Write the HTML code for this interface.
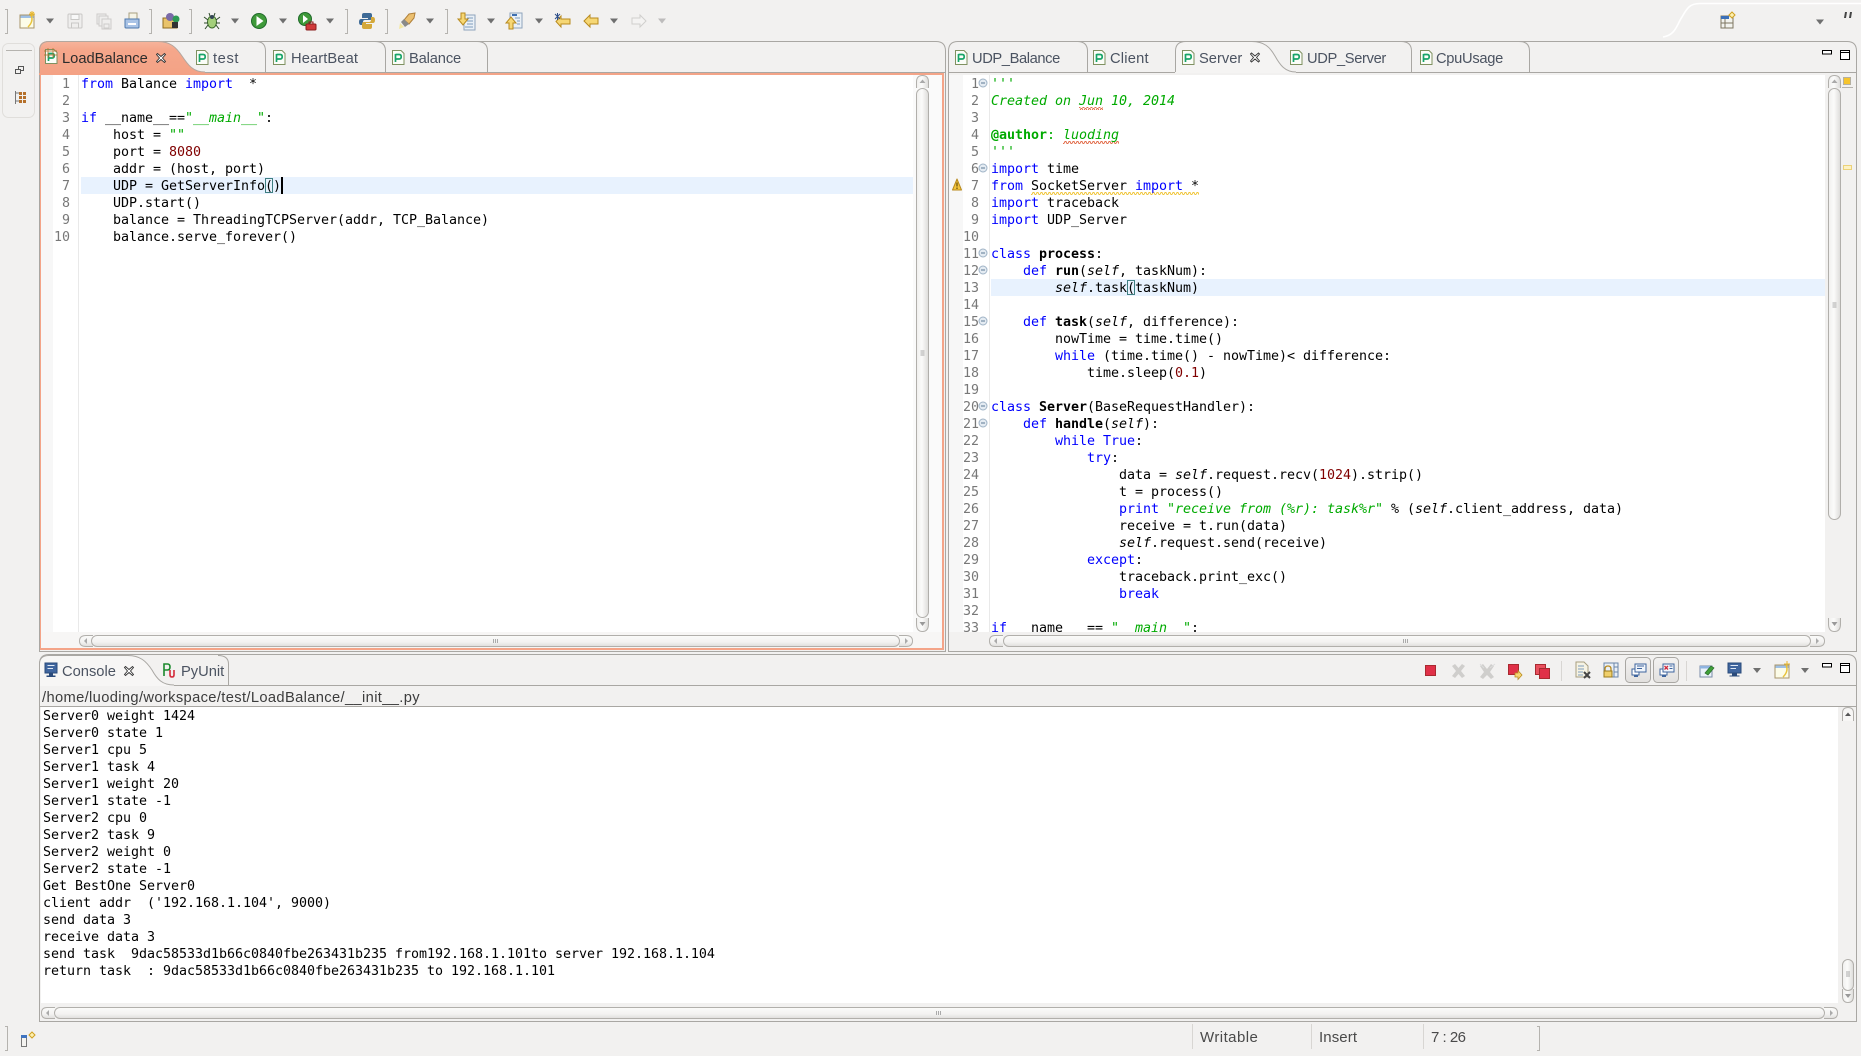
<!DOCTYPE html>
<html><head><meta charset="utf-8"><title>Eclipse</title>
<style>
html,body{margin:0;padding:0;width:1861px;height:1056px;overflow:hidden;background:#f2f1f0}
svg.bg{position:absolute;left:0;top:0}
.ui{position:absolute;font:14.7px/18px "Liberation Sans",sans-serif;white-space:pre;color:#4b5361}
.ui.a{color:#2c2c2c}
.st{position:absolute;font:15px/18px "Liberation Sans",sans-serif;white-space:pre;color:#4a4a4a;letter-spacing:.45px}
.code,.nums{position:absolute;font:13.33px/17px "DejaVu Sans Mono",monospace;white-space:pre;color:#000;overflow:hidden;letter-spacing:-.025px}
.nums{color:#787878;text-align:right}
.code b{font-weight:bold}
.k{color:#0000ff}.s{color:#00aa00}.i{color:#00aa00;font-style:italic}.n{color:#800000}.f{font-style:italic}
</style></head><body>
<svg class="bg" width="1861" height="1056" viewBox="0 0 1861 1056">
<defs>
<linearGradient id="hg" x1="0" y1="0" x2="0" y2="1"><stop offset="0" stop-color="#fbfbfa"/><stop offset=".6" stop-color="#f3f2f1"/><stop offset="1" stop-color="#dfdedc"/></linearGradient>
<linearGradient id="vg" x1="0" y1="0" x2="1" y2="0"><stop offset="0" stop-color="#f0efee"/><stop offset=".45" stop-color="#fbfbfa"/><stop offset="1" stop-color="#dcdbd9"/></linearGradient>
<linearGradient id="og" x1="0" y1="0" x2="0" y2="1"><stop offset="0" stop-color="#f6b49c"/><stop offset=".25" stop-color="#f5a78b"/><stop offset="1" stop-color="#f4a285"/></linearGradient>
<linearGradient id="tb" x1="0" y1="0" x2="0" y2="1"><stop offset="0" stop-color="#f3f2f1"/><stop offset="1" stop-color="#e2e0de"/></linearGradient>
<pattern id="sqr" width="4" height="3" patternUnits="userSpaceOnUse"><path d="M0,2.5 L1,.5 L2,.5 L3,2.5 L4,2.5" fill="none" stroke="#e2704f" stroke-width="1"/></pattern>
<pattern id="sqy" width="4" height="3" patternUnits="userSpaceOnUse"><path d="M0,2.5 L1,.5 L2,.5 L3,2.5 L4,2.5" fill="none" stroke="#f0c63c" stroke-width="1"/></pattern>
<g id="doc"><path d="M.5,.5H9L12,3.5V14.5H.5Z" fill="#fbfdf8" stroke="#7f9160"/><path d="M3.5,4V12M3.5,4.5H7.2Q9.2,4.5 9.2,6.7T7.2,9H3.5" fill="none" stroke="#17a468" stroke-width="1.7"/></g>
<path id="dd" d="M-4,-2.5H4L0,2.5Z" fill="#6f6f6f"/>
<g id="fold"><circle r="4" fill="#e4ebf2" stroke="#9fb3c6"/><path d="M-2,0H2" stroke="#5d7a94"/></g>
<path id="cx" d="M-4.5,-3.5L-3.5,-4.5L0,-1.5L3.5,-4.5L4.5,-3.5L1.5,0L4.5,3.5L3.5,4.5L0,1.5L-3.5,4.5L-4.5,3.5L-1.5,0Z" fill="#fff" stroke="#333" stroke-width=".9"/>
</defs>

<!-- top-right switcher curve -->
<path d="M1663,37 C1676,35 1677,24 1682,17 C1687,8 1690,3.5 1700,3.5 H1861" fill="none" stroke="#fff" stroke-width="1.6"/>

<!-- toolbar separators -->
<g fill="none" stroke="#b5b3af">
<path d="M5,9.5H7.5V33.5H5"/><path d="M149,9.5H151.5V33.5H149"/><path d="M189,9.5H191.5V33.5H189"/><path d="M345,9.5H347.5V33.5H345"/><path d="M385,9.5H387.5V33.5H385"/><path d="M445,9.5H447.5V33.5H445"/>
</g>

<!-- toolbar icons -->
<g transform="translate(27,21)"><rect x="-7" y="-6" width="14" height="13" fill="#fcfce8" stroke="#a8956a"/><rect x="-6.5" y="-5.5" width="13" height="2.5" fill="#9ec0e6"/><path d="M4,-6 Q7,0 1,6" fill="none" stroke="#e8c33c" stroke-width="1.5"/><path d="M5,-10V-4M2,-7H8M3,-9L7,-5M7,-9L3,-5" stroke="#e8b830"/></g>
<use href="#dd" x="50" y="21"/>
<g transform="translate(75,21)" fill="none" stroke="#c9c8c6"><rect x="-7" y="-7" width="14" height="14" rx="1" fill="#efeeed"/><rect x="-4" y="-6.5" width="8" height="5" fill="#f8f8f8"/><rect x="-3.5" y="2" width="7" height="5"/></g>
<g transform="translate(104,21)" fill="#efeeed" stroke="#cdccca"><rect x="-7" y="-7" width="9" height="10"/><rect x="-5" y="-5" width="9" height="10"/><rect x="-2" y="-2" width="9" height="10"/><rect x="0" y="3" width="5" height="4"/></g>
<g transform="translate(132,21)"><rect x="-3" y="-8" width="8" height="8" fill="#f6f4e6" stroke="#a8a080"/><path d="M-7,-2H7V6Q7,7 6,7H-6Q-7,7 -7,6Z" fill="#a9c3e6" stroke="#4f78ac"/><rect x="-4" y="2" width="8" height="2" fill="#fff"/></g>
<g transform="translate(171,21)"><path d="M-8,-3H-2L0,-1H6V7H-8Z" fill="#e9c36a" stroke="#8e6b1f"/><circle cx="-1" cy="-4" r="4" fill="#7a6aa8"/><circle cx="5" cy="-2" r="3.5" fill="#2e9a55"/><rect x="1" y="1" width="6" height="6" fill="#333"/></g>
<g transform="translate(212,21)"><ellipse cx="0" cy="1" rx="4.5" ry="6" fill="#a3cf7a" stroke="#3b6b2a"/><path d="M-8,-4L-4,-1M8,-4L4,-1M-8,2H-4M8,2H4M-7,8L-4,4M7,8L4,4M-3,-8L-2,-5M3,-8L2,-5" stroke="#2e4a2a"/><circle cx="0" cy="-4" r="2" fill="#345"/></g>
<use href="#dd" x="235" y="21"/>
<g transform="translate(259,21)"><circle r="7.5" fill="#3f9a3a" stroke="#1f6a2a"/><path d="M-2.5,-5L4.5,0L-2.5,5Z" fill="#fff"/></g>
<use href="#dd" x="283" y="21"/>
<g transform="translate(305,19)"><circle r="6.5" fill="#3f9a3a" stroke="#1f6a2a"/><path d="M-2,-4L3,0L-2,4Z" fill="#fff"/></g>
<g transform="translate(311,26)"><rect x="-5" y="-2" width="10" height="6" rx="1" fill="#d03a3a" stroke="#8a1e1e"/><path d="M-2,-2V-4H2V-2" fill="none" stroke="#8a1e1e"/></g>
<use href="#dd" x="330" y="21"/>
<g transform="translate(367,21)"><path d="M0,-8H-3Q-5,-8 -5,-6V-3H1V-2H-6Q-8,-2 -8,1Q-8,4 -6,4H-4V1Q-4,-1 -2,-1H3Q5,-1 5,-3V-6Q5,-8 3,-8Z" fill="#3e6a96"/><path d="M0,8H3Q5,8 5,6V3H-1V2H6Q8,2 8,-1Q8,-4 6,-4H4V-1Q4,1 2,1H-3Q-5,1 -5,3V6Q-5,8 -3,8Z" fill="#d4a83a"/></g>
<g transform="translate(407,21)"><path d="M8,-8L2,-7L-3,-1L2,3L7,-3Z" fill="#ecc070" stroke="#b0803a"/><path d="M-3,-2L2,3L-2,6L-6,1Z" fill="#8a8a88"/><path d="M-7,2L-3,6L-8,8Z" fill="#f4e8a0"/></g>
<use href="#dd" x="430" y="21"/>
<g transform="translate(466,21)"><rect x="-2" y="-6" width="11" height="15" fill="#eaf0f6" stroke="#8fa4bc"/><path d="M1,-3H7M1,0H7M1,3H7M-1,6H7" stroke="#7f9cbc"/><path d="M-5,-8H-1V-2H2L-3,4L-8,-2H-5Z" fill="#f6d774" stroke="#b88a1e"/></g>
<use href="#dd" x="491" y="21"/>
<g transform="translate(514,21)"><rect x="-4" y="-8" width="12" height="15" fill="#eaf0f6" stroke="#8fa4bc"/><path d="M-2,-6H3" stroke="#3f6fb0" stroke-width="2"/><path d="M1,-3H6M3,0H6M3,3H6" stroke="#7f9cbc"/><path d="M-5,8H-1V2H2L-3,-4L-8,2H-5Z" fill="#f6d774" stroke="#b88a1e"/></g>
<use href="#dd" x="539" y="21"/>
<g transform="translate(563,21)"><path d="M-2,-5V-2H7V3H-2V6L-7,.5Z" fill="#f6d774" stroke="#b88a1e"/><path d="M-8,-7L-3,-2M-3,-7L-8,-2M-5.5,-8V-1" stroke="#2e4f8a"/></g>
<g transform="translate(591,21)"><path d="M-1,-6V-3H7V3H-1V6L-7,0Z" fill="#f6d774" stroke="#b88a1e"/></g>
<use href="#dd" x="614" y="21"/>
<g transform="translate(639,21)"><path d="M1,-6V-3H-7V3H1V6L7,0Z" fill="#f4f3f2" stroke="#d0cfcd"/></g>
<use href="#dd" x="662" y="21" opacity=".4"/>

<!-- right top icons -->
<g transform="translate(1727,22)"><rect x="-6" y="-6" width="12" height="12" fill="#f2f3ee" stroke="#7d7660"/><rect x="-6" y="-6" width="8" height="3" fill="#3a6fb8"/><path d="M-2,-3V6M-6,1H6" stroke="#7d7660"/><path d="M5,-10L8,-7L5,-4L2,-7Z" fill="#fdf0b0" stroke="#d0a020"/></g>
<use href="#dd" x="1820" y="22"/>
<path d="M1845,12H1847L1846,18H1844ZM1850,12H1852L1851,18H1849Z" fill="#444"/>

<!-- left trim -->
<rect x="2.5" y="43.5" width="32" height="74" rx="6" fill="#f2f1f0" stroke="#e0dedb"/>
<path d="M6,50.5H32" stroke="#b5b3af"/>
<g fill="none" stroke="#555"><rect x="18.5" y="66.5" width="5" height="4"/><rect x="15.5" y="69.5" width="5" height="4" fill="#f2f1f0"/></g>
<path d="M15.5,91V104M15.5,93H19M15.5,101H19" stroke="#777" fill="none"/><g fill="#b5702a"><rect x="19" y="92" width="3" height="3"/><rect x="23" y="92" width="3" height="3"/><rect x="19" y="96" width="3" height="3"/><rect x="23" y="96" width="3" height="3"/><rect x="19" y="100" width="3" height="3"/><rect x="23" y="100" width="3" height="3"/></g>

<!-- left editor panel -->
<rect x="39" y="73" width="905" height="577" fill="#f4a488"/>
<rect x="41" y="75" width="901" height="573" fill="#f7f6f5"/>
<rect x="41" y="75" width="872" height="557" fill="#fff"/>
<rect x="41" y="75" width="12" height="557" fill="#f7f7f7"/>
<rect x="913" y="75" width="29" height="557" fill="#fafafa"/>
<path d="M78.5,75V632" stroke="#e9e9e9"/>
<rect x="81" y="177" width="832" height="17" fill="#e8f2fe"/>
<rect x="265.5" y="178.5" width="7" height="14" fill="none" stroke="#3f7f82"/>
<rect x="281" y="177" width="2" height="17" fill="#000"/>
<path d="M39.5,73V51Q39.5,41.5 49,41.5H936Q945.5,41.5 945.5,51V651.5H39.5V73" fill="none" stroke="#a9a7a3"/>
<path d="M39,72.5H945" stroke="#a9a7a3"/>
<path d="M39,74V50Q39,41 49,41H158C170,41 176,47 182,56C188,65 193,72 205,72V75H39Z" fill="url(#og)"/>
<path d="M39.5,73V51Q39.5,41.5 49,41.5H158C170,41.5 176,47 182,56C188,65 193,72 205,72" fill="none" stroke="#b3a79f"/>
<path d="M256,41.5Q265.5,41.5 265.5,51V72M375,41.5Q385.5,41.5 385.5,51V72M477,41.5Q487.5,41.5 487.5,51V72" fill="none" stroke="#a9a7a3"/>
<use href="#doc" x="45" y="49"/><path d="M48,48V58M53,48V58M44,51H57M44,55H57" stroke="#b5702a" opacity=".8"/>
<use href="#cx" x="161" y="58"/>
<use href="#doc" x="196" y="50"/><use href="#doc" x="273" y="50"/><use href="#doc" x="392" y="50"/>

<!-- left vscroll -->
<g fill="url(#vg)" stroke="#b1afab">
<path d="M916.5,88V82Q916.5,75.5 922.5,75.5Q928.5,75.5 928.5,82V88"/>
<path d="M916.5,618V624Q916.5,631.5 922.5,631.5Q928.5,631.5 928.5,624V618"/>
<rect x="916.5" y="88.5" width="12" height="529" rx="6"/>
</g>
<path d="M919.5,83L922.5,79.5L925.5,83Z" fill="#aaa"/><path d="M919.5,622H925.5L922.5,626Z" fill="#999"/>
<path d="M920.5,351H924.5M920.5,353H924.5M920.5,355H924.5" stroke="#aaa"/>
<!-- left hscroll -->
<g fill="url(#hg)" stroke="#b1afab">
<path d="M93,635.5H86Q79.5,635.5 79.5,641Q79.5,646.5 86,646.5H93"/>
<path d="M899,635.5H906Q912.5,635.5 912.5,641Q912.5,646.5 906,646.5H899"/>
<rect x="91.5" y="635.5" width="808" height="11" rx="5.5"/>
</g>
<path d="M87,638V644L84,641Z" fill="#aaa"/><path d="M905,638V644L908,641Z" fill="#aaa"/>
<path d="M493.5,639V643M495.5,639V643M497.5,639V643" stroke="#aaa"/>

<!-- right editor panel -->
<rect x="949" y="75" width="876" height="557" fill="#fff"/>
<rect x="949" y="75" width="14" height="557" fill="#f7f7f7"/>
<path d="M989.5,75V632" stroke="#e9e9e9"/>
<rect x="991" y="279" width="834" height="17" fill="#e8f2fe"/>
<rect x="1127.5" y="280.5" width="7" height="14" fill="none" stroke="#3f7f82"/>
<path d="M948.5,73V51Q948.5,41.5 958,41.5H1847Q1856.5,41.5 1856.5,51V651.5H948.5V73" fill="none" stroke="#a9a7a3"/>
<path d="M948,72.5H1175M1296,72.5H1856" stroke="#a9a7a3"/>
<path d="M1087.5,72V51Q1087.5,42 1078,41.5M1176,72V50" fill="none" stroke="#a9a7a3"/>
<path d="M1175.5,73V51Q1175.5,41.5 1186,41.5H1252C1264,41.5 1270,47 1275,56C1280,65 1285,72 1296,72V73Z" fill="#f5f4f3" stroke="none"/>
<path d="M1175.5,72V51Q1175.5,41.5 1186,41.5H1252C1264,41.5 1270,47 1275,56C1280,65 1285,72 1296,72" fill="none" stroke="#a9a7a3"/>
<path d="M1401,41.5Q1411.5,41.5 1411.5,51V72M1519,41.5Q1529.5,41.5 1529.5,51V72" fill="none" stroke="#a9a7a3"/>
<use href="#doc" x="955" y="50"/><use href="#doc" x="1093" y="50"/><use href="#doc" x="1182" y="50"/><use href="#doc" x="1290" y="50"/><use href="#doc" x="1420" y="50"/>
<use href="#cx" x="1255" y="57.5"/>
<rect x="1822.5" y="50.5" width="9" height="3.5" fill="#fff" stroke="#000"/>
<path d="M1840.5,50.5H1849.5V59.5H1840.5ZM1840.5,52.5H1849.5" fill="#fff" stroke="#000"/>
<!-- folds -->
<use href="#fold" x="983" y="83"/><use href="#fold" x="983" y="168"/><use href="#fold" x="983" y="253"/><use href="#fold" x="983" y="270"/><use href="#fold" x="983" y="321"/><use href="#fold" x="983" y="406"/><use href="#fold" x="983" y="423"/>
<!-- warning -->
<path d="M957,179L961.5,190H952.5Z" fill="#f3c53c" stroke="#b88a1e" stroke-linejoin="round"/><path d="M957,182.5V186.5M957,187.5V189" stroke="#4a3500"/>
<!-- squiggles -->
<rect x="1079" y="107" width="24" height="3" fill="url(#sqr)"/>
<rect x="1063" y="141" width="56" height="3" fill="url(#sqr)"/>
<rect x="1031" y="192" width="168" height="3" fill="url(#sqy)"/>
<!-- right vscroll -->
<g fill="url(#vg)" stroke="#b1afab">
<path d="M1828.5,88V82Q1828.5,75.5 1834.5,75.5Q1840.5,75.5 1840.5,82V88"/>
<path d="M1828.5,618V624Q1828.5,631.5 1834.5,631.5Q1840.5,631.5 1840.5,624V618"/>
<rect x="1828.5" y="88.5" width="12" height="431" rx="6"/>
</g>
<path d="M1831.5,83L1834.5,79.5L1837.5,83Z" fill="#aaa"/><path d="M1831.5,622H1837.5L1834.5,626Z" fill="#999"/>
<path d="M1832.5,303H1836.5M1832.5,305H1836.5M1832.5,307H1836.5" stroke="#aaa"/>
<!-- overview -->
<rect x="1843.5" y="77.5" width="7" height="7" fill="#f6c42c" stroke="#b5b0a0"/>
<path d="M1842,87.5H1853" stroke="#b5b3af"/>
<rect x="1843.5" y="165.5" width="8" height="4" fill="#fdf2c4" stroke="#ecd27a"/>
<!-- right hscroll -->
<g fill="url(#hg)" stroke="#b1afab">
<path d="M1003,635.5H995Q989.5,635.5 989.5,641Q989.5,646.5 995,646.5H1003"/>
<path d="M1810,635.5H1818Q1824.5,635.5 1824.5,641Q1824.5,646.5 1818,646.5H1810"/>
<rect x="1003.5" y="635.5" width="807" height="11" rx="5.5"/>
</g>
<path d="M997,638V644L994,641Z" fill="#aaa"/><path d="M1816,638V644L1819,641Z" fill="#aaa"/>
<path d="M1403.5,639V643M1405.5,639V643M1407.5,639V643" stroke="#aaa"/>

<!-- console panel -->
<rect x="41" y="707" width="1797" height="296" fill="#fff"/>
<path d="M39.5,685V664Q39.5,654.5 49,654.5H1847Q1856.5,654.5 1856.5,664V1021.5H39.5V685" fill="none" stroke="#a9a7a3"/>
<path d="M174,685.5H1856M39,706.5H1856" stroke="#a9a7a3"/>
<path d="M39.5,686V664Q39.5,655.5 49,655.5H128C140,655.5 146,661 152,670C157,679 162,685 174,685V686Z" fill="#f7f6f5"/>
<path d="M39.5,686V664Q39.5,655.5 49,655.5H128C140,655.5 146,661 152,670C157,679 162,685 174,685" fill="none" stroke="#a9a7a3"/>
<path d="M218,655.5Q228.5,655.5 228.5,664V685" fill="none" stroke="#a9a7a3"/>
<!-- console tab icons -->
<g transform="translate(51,670)"><rect x="-6" y="-7" width="12" height="10" fill="#3f659e" stroke="#2a4a7a"/><path d="M-3.5,-4.5H3.5M-3.5,-1.5H2" stroke="#dfe8f4"/><path d="M-2,3.5H2V5.5H4.5V7H-4.5V5.5H-2Z" fill="#2a4a7a"/></g>
<use href="#cx" x="129" y="671"/>
<path d="M164,676V664H167.5Q170,664 170,667T167.5,670H164" fill="none" stroke="#1c8a2e" stroke-width="1.6"/>
<path d="M170,670V675Q170,677 172,677T174,675V670" fill="none" stroke="#d42a3a" stroke-width="1.6"/>
<!-- console toolbar -->
<rect x="1425.5" y="665.5" width="10" height="10" fill="#e03048" stroke="#a82a30"/>
<g fill="#cfcecc"><path d="M1452,666L1455,664L1458.5,668L1462,664L1465,666L1461,671L1465,676L1462,678L1458.5,674L1455,678L1452,676L1456,671Z"/><path d="M1480,666L1483,664L1487,669L1491,664L1494,666L1490,672L1494,677L1491,679L1487,675L1483,679L1480,677L1484,672Z"/></g>
<path d="M1480,664L1484,668M1490,668L1495,664" stroke="#ddd"/>
<rect x="1508.5" y="664.5" width="10" height="10" fill="#e03048" stroke="#a82a30"/>
<path d="M1515,673H1518V670.5L1522,675L1518,679.5V677H1515Z" fill="#f6d774" stroke="#b88a1e" stroke-width=".8"/>
<rect x="1535.5" y="664.5" width="10" height="10" fill="#e8505e" stroke="#a82a30"/><rect x="1539.5" y="668.5" width="10" height="10" fill="#e03048" stroke="#a82a30"/>
<path d="M1561.5,661V681" stroke="#d8d6d3"/>
<g transform="translate(1582,670)"><path d="M-6,-8H2L6,-4V7H-6Z" fill="#f6f3e4" stroke="#a89f80"/><path d="M-4,-4H2M-4,-1H2M-4,2H1M-4,5H1" stroke="#7f9cbc"/><path d="M2,2L8,8M8,2L2,8" stroke="#444" stroke-width="2"/></g>
<g transform="translate(1611,670)"><rect x="-7" y="-7" width="14" height="14" fill="#eaf0f6" stroke="#6a85a8"/><path d="M3,-7V7M3,-3H7M3,2H7" stroke="#6a85a8"/><path d="M-6,1V-1Q-6,-4 -3,-4T0,-1V1" fill="none" stroke="#b88a1e" stroke-width="1.3"/><rect x="-7" y="1" width="8" height="6" fill="#f0cf6a" stroke="#9a7a1c"/></g>
<rect x="1625.5" y="657.5" width="25" height="25" rx="4" fill="url(#tb)" stroke="#a9a7a3"/>
<rect x="1653.5" y="657.5" width="25" height="25" rx="4" fill="url(#tb)" stroke="#a9a7a3"/>
<g transform="translate(1638,670)"><rect x="-6" y="-1" width="7" height="6" fill="#fff" stroke="#3f659e"/><path d="M-4,6H0" stroke="#3f659e" stroke-width="2"/><rect x="-3" y="-6" width="11" height="8" fill="#f0f5fb" stroke="#3f659e"/><path d="M-1,-4H6M-1,-1.5H4" stroke="#3f659e"/></g>
<g transform="translate(1666,670)"><rect x="-6" y="-1" width="7" height="6" fill="#fff" stroke="#3f659e"/><path d="M-4,6H0" stroke="#3f659e" stroke-width="2"/><rect x="-3" y="-6" width="11" height="8" fill="#f0f5fb" stroke="#3f659e"/><path d="M-1.5,-4L2,-.5M2,-4L-1.5,-.5" stroke="#d02a3a" stroke-width="1.3"/><path d="M3.5,-4H6.5M3.5,-1.5H6.5" stroke="#3f659e"/></g>
<path d="M1686.5,661V681" stroke="#d8d6d3"/>
<g transform="translate(1706,671)"><rect x="-6" y="-5" width="12" height="11" fill="#eaf2fa" stroke="#7a8ca8"/><rect x="-6" y="-5" width="12" height="2.5" fill="#8fb4e0"/><path d="M-1,2L5,-5L8,-3L2,4Z" fill="#3fa03a" stroke="#2a6a2a" stroke-width=".7"/></g>
<g transform="translate(1734,670)"><rect x="-6" y="-7" width="13" height="10" fill="#3f659e" stroke="#2a4a7a"/><path d="M-3.5,-4.5H4M-3.5,-1.5H2" stroke="#dfe8f4"/><path d="M-2,3.5H3V5.5H5.5V6.5H-4.5V5.5H-2Z" fill="#2a4a7a"/></g>
<use href="#dd" x="1757" y="670.5"/>
<g transform="translate(1782,671)"><rect x="-7" y="-6" width="14" height="13" fill="#fcfce8" stroke="#a8956a"/><rect x="-6.5" y="-5.5" width="13" height="2.5" fill="#9ec0e6"/><path d="M4,-6Q7,0 1,6" fill="none" stroke="#e8c33c" stroke-width="1.5"/><path d="M5,-10V-4M2,-7H8" stroke="#e8b830"/></g>
<use href="#dd" x="1805" y="670.5"/>
<rect x="1822.5" y="663.5" width="9" height="3.5" fill="#fff" stroke="#000"/>
<path d="M1840.5,663.5H1849.5V672.5H1840.5ZM1840.5,665.5H1849.5" fill="#fff" stroke="#000"/>
<!-- console vscroll -->
<g fill="url(#vg)" stroke="#b1afab">
<path d="M1842.5,721V713Q1842.5,707.5 1848,707.5Q1853.5,707.5 1853.5,713V721" fill="#f7f6f5"/>
<path d="M1842.5,989V996Q1842.5,1002.5 1848,1002.5Q1853.5,1002.5 1853.5,996V989"/>
<rect x="1842.5" y="959.5" width="11" height="31" rx="5.5"/>
</g>
<path d="M1845,716L1848,712.5L1851,716Z" fill="#555"/><path d="M1845,994H1851L1848,998Z" fill="#999"/>
<path d="M1846,972H1850M1846,974H1850M1846,976H1850" stroke="#aaa"/>
<!-- console hscroll -->
<g fill="url(#hg)" stroke="#b1afab">
<path d="M55,1007.5H47Q41.5,1007.5 41.5,1013Q41.5,1018.5 47,1018.5H55"/>
<path d="M1824,1007.5H1832Q1837.5,1007.5 1837.5,1013Q1837.5,1018.5 1832,1018.5H1824"/>
<rect x="54.5" y="1007.5" width="1770" height="11" rx="5.5"/>
</g>
<path d="M49,1010V1016L46,1013Z" fill="#aaa"/><path d="M1830,1010V1016L1833,1013Z" fill="#aaa"/>
<path d="M936.5,1011V1015M938.5,1011V1015M940.5,1011V1015" stroke="#aaa"/>

<!-- status bar -->
<path d="M5,1026.5H7.5V1050.5H5" fill="none" stroke="#b5b3af"/>
<rect x="21.5" y="1035.5" width="5" height="11" fill="#f4f3f0" stroke="#777"/><rect x="21" y="1035" width="6" height="3" fill="#3f74c0"/>
<path d="M32,1032L35,1035L32,1038L29,1035Z" fill="#fdf0b0" stroke="#d0a020"/>
<path d="M1192.5,1024V1049M1311.5,1024V1049M1423.5,1024V1049" stroke="#d8d6d3"/>
<path d="M1537,1026.5H1539.5V1050.5H1537" fill="none" stroke="#b5b3af"/>
</svg>

<!-- tab labels -->
<div class="ui a" style="left:62px;top:50px">LoadBalance</div>
<div class="ui" style="left:213px;top:50px;letter-spacing:.6px">test</div>
<div class="ui" style="left:291px;top:50px;letter-spacing:.1px">HeartBeat</div>
<div class="ui" style="left:409px;top:50px;letter-spacing:-.15px">Balance</div>
<div class="ui" style="left:972px;top:50px;letter-spacing:-.4px">UDP_Balance</div>
<div class="ui" style="left:1110px;top:50px;letter-spacing:.2px">Client</div>
<div class="ui" style="left:1199px;top:50px">Server</div>
<div class="ui" style="left:1307px;top:50px;letter-spacing:-.35px">UDP_Server</div>
<div class="ui" style="left:1436px;top:50px;letter-spacing:-.3px">CpuUsage</div>
<div class="ui" style="left:62px;top:663px">Console</div>
<div class="ui" style="left:181px;top:663px">PyUnit</div>
<div class="ui" style="left:42px;top:689px;color:#3c3c3c;letter-spacing:.36px">/home/luoding/workspace/test/LoadBalance/__init__.py</div>

<!-- left editor -->
<div class="nums" style="left:41px;top:76px;width:29px;height:170px">1
2
3
4
5
6
7
8
9
10</div>
<div class="code" style="left:81px;top:76px;width:832px;height:556px"><span class="k">from</span> Balance <span class="k">import</span>  *

<span class="k">if</span> __name__==<span class="s">"</span><span class="i">__main__</span><span class="s">"</span>:
    host = <span class="s">""</span>
    port = <span class="n">8080</span>
    addr = (host, port)
    UDP = GetServerInfo()
    UDP.start()
    balance = ThreadingTCPServer(addr, TCP_Balance)
    balance.serve_forever()</div>

<!-- right editor -->
<div class="nums" style="left:949px;top:76px;width:30px;height:556px">1
2
3
4
5
6
7
8
9
10
11
12
13
14
15
16
17
18
19
20
21
22
23
24
25
26
27
28
29
30
31
32
33</div>
<div class="code" style="left:991px;top:76px;width:834px;height:556px"><span class="s">'''</span>
<span class="i">Created on Jun 10, 2014</span>

<b class="s">@author</b><span class="s">:</span> <span class="i">luoding</span>
<span class="s">'''</span>
<span class="k">import</span> time
<span class="k">from</span> SocketServer <span class="k">import</span> *
<span class="k">import</span> traceback
<span class="k">import</span> UDP_Server

<span class="k">class</span> <b>process</b>:
    <span class="k">def</span> <b>run</b>(<span class="f">self</span>, taskNum):
        <span class="f">self</span>.task(taskNum)

    <span class="k">def</span> <b>task</b>(<span class="f">self</span>, difference):
        nowTime = time.time()
        <span class="k">while</span> (time.time() - nowTime)&lt; difference:
            time.sleep(<span class="n">0.1</span>)

<span class="k">class</span> <b>Server</b>(BaseRequestHandler):
    <span class="k">def</span> <b>handle</b>(<span class="f">self</span>):
        <span class="k">while</span> <span class="k">True</span>:
            <span class="k">try</span>:
                data = <span class="f">self</span>.request.recv(<span class="n">1024</span>).strip()
                t = process()
                <span class="k">print</span> <span class="s">"</span><span class="i">receive from (%r): task%r</span><span class="s">"</span> % (<span class="f">self</span>.client_address, data)
                receive = t.run(data)
                <span class="f">self</span>.request.send(receive)
            <span class="k">except</span>:
                traceback.print_exc()
                <span class="k">break</span>

<span class="k">if</span> __name__ == <span class="s">"</span><span class="i">__main__</span><span class="s">"</span>:</div>

<!-- console -->
<div class="code" style="left:43px;top:708px;width:1790px;height:295px">Server0 weight 1424
Server0 state 1
Server1 cpu 5
Server1 task 4
Server1 weight 20
Server1 state -1
Server2 cpu 0
Server2 task 9
Server2 weight 0
Server2 state -1
Get BestOne Server0
client addr  ('192.168.1.104', 9000)
send data 3
receive data 3
send task  9dac58533d1b66c0840fbe263431b235 from192.168.1.101to server 192.168.1.104
return task  : 9dac58533d1b66c0840fbe263431b235 to 192.168.1.101</div>

<!-- status -->
<div class="st" style="left:1200px;top:1029px">Writable</div>
<div class="st" style="left:1319px;top:1029px;letter-spacing:.1px">Insert</div>
<div class="st" style="left:1431px;top:1029px;letter-spacing:-.5px">7 : 26</div>
</body></html>
